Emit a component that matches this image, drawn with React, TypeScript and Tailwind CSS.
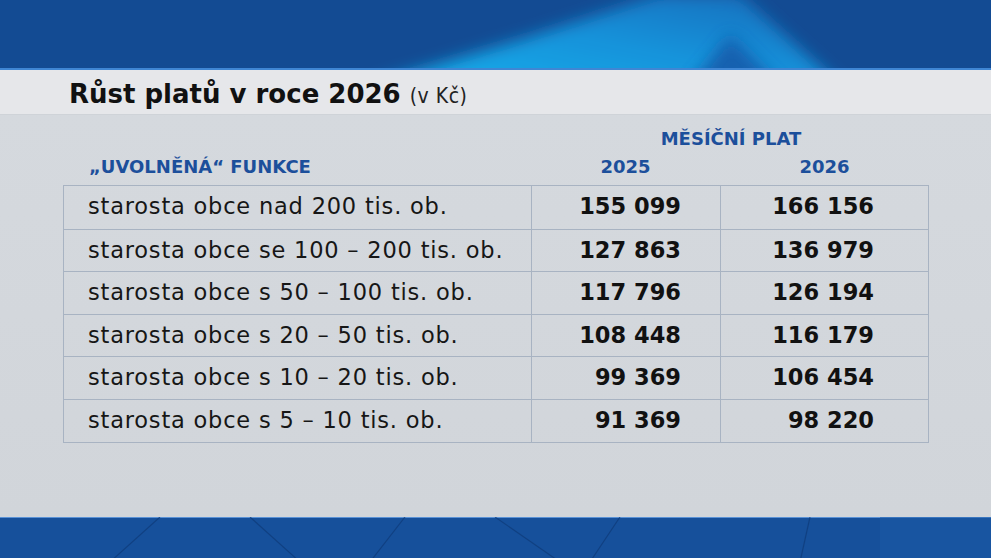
import React from 'react';

const rows = [
  { label: 'starosta obce nad 200 tis. ob.', a: '155 099', b: '166 156' },
  { label: 'starosta obce se 100 – 200 tis. ob.', a: '127 863', b: '136 979' },
  { label: 'starosta obce s 50 – 100 tis. ob.', a: '117 796', b: '126 194' },
  { label: 'starosta obce s 20 – 50 tis. ob.', a: '108 448', b: '116 179' },
  { label: 'starosta obce s 10 – 20 tis. ob.', a: '99 369', b: '106 454' },
  { label: 'starosta obce s 5 – 10 tis. ob.', a: '91 369', b: '98 220' },
];

const TopBand: React.FC = () => (
  <div className="relative h-[70px] bg-[#134b93] overflow-hidden">
    <svg className="absolute inset-0" width="991" height="70" viewBox="0 0 991 70">
      <defs>
        <filter id="blur" x="-20%" y="-50%" width="140%" height="200%">
          <feGaussianBlur stdDeviation="8" />
        </filter>
        <linearGradient id="streak" x1="0" y1="1" x2="1" y2="0">
          <stop offset="0" stopColor="#19b0ec" />
          <stop offset="0.5" stopColor="#1592da" />
          <stop offset="1" stopColor="#1669b8" />
        </linearGradient>
      </defs>
      <polygon points="370,85 520,40 660,-5 740,-5 840,85" fill="url(#streak)" filter="url(#blur)" />
      <polygon points="690,85 730,35 780,85" fill="#1258a8" filter="url(#blur)" opacity="0.85" />
    </svg>
    <div className="absolute bottom-0 left-0 right-0 h-[2px] bg-[#3f86d4]" />
  </div>
);

const BottomBand: React.FC = () => (
  <div className="relative h-[41px] bg-[#16509b] overflow-hidden">
    <div className="absolute top-0 left-0 right-0 h-[1px] bg-[#5a92d6]" />
    <svg className="absolute inset-0" width="991" height="41" viewBox="0 0 991 41">
      <g stroke="#0e3a78" strokeWidth="1.2" opacity="0.7" fill="none">
        <line x1="160" y1="0" x2="110" y2="45" />
        <line x1="250" y1="0" x2="300" y2="45" />
        <line x1="405" y1="0" x2="370" y2="45" />
        <line x1="495" y1="0" x2="560" y2="45" />
        <line x1="620" y1="0" x2="590" y2="45" />
        <line x1="810" y1="0" x2="800" y2="45" />
      </g>
      <rect x="880" y="0" width="111" height="41" fill="#1a5aa8" opacity="0.5" />
    </svg>
  </div>
);

export default function App() {
  return (
    <div
      className="w-[991px] h-[558px] flex flex-col overflow-hidden bg-[#d3d7dc]"
      style={{ fontFamily: '"DejaVu Sans", "Noto Sans", sans-serif' }}
    >
      <TopBand />
      <div className="h-[45px] bg-[#e6e7ea] flex items-center pl-[69px] pt-[4px] gap-[9px] border-b border-[#cfd3d8]">
        <span className="text-[26px] font-bold text-[#111] leading-none">Růst platů v roce 2026</span>
        <span className="text-[21px] text-[#222] leading-none mt-[4px] tracking-[0.5px]" style={{ fontFamily: '"DejaVu Sans Condensed", "Liberation Sans Narrow", sans-serif' }}>(v Kč)</span>
      </div>
      <div className="flex-1 bg-gradient-to-b from-[#d5d9de] to-[#d1d5da] pt-[15px] px-[63px]">
        <div className="w-[866px]">
          <div className="flex text-[#1c4f9b] font-bold text-[18px] leading-none">
            <div className="w-[468px] flex items-end pl-[26px] pb-[9px]">„UVOLNĚNÁ“ FUNKCE</div>
            <div className="flex-1 flex flex-col items-center">
              <div className="pb-[10px] pl-[2px]">MĚSÍČNÍ PLAT</div>
              <div className="flex w-full">
                <div className="w-[189px] text-center pb-[9px]">2025</div>
                <div className="flex-1 text-center pb-[9px]">2026</div>
              </div>
            </div>
          </div>
          <div className="border border-[#a8b3c2]">
            {rows.map((r, i) => (
              <div
                key={r.label}
                className={`flex h-[42.6px] ${i > 0 ? 'border-t border-[#a8b3c2]' : ''}`}
              >
                <div className="w-[468px] border-r border-[#a8b3c2] flex items-center pl-[24px] text-[22.5px] tracking-[0.8px] text-[#161616]">
                  {r.label}
                </div>
                <div className="w-[189px] border-r border-[#a8b3c2] flex items-center justify-end pr-[39px] text-[22.5px] font-bold text-[#111]">
                  {r.a}
                </div>
                <div className="flex-1 flex items-center justify-end pr-[54px] text-[22.5px] font-bold text-[#111]">
                  {r.b}
                </div>
              </div>
            ))}
          </div>
        </div>
      </div>
      <BottomBand />
    </div>
  );
}
